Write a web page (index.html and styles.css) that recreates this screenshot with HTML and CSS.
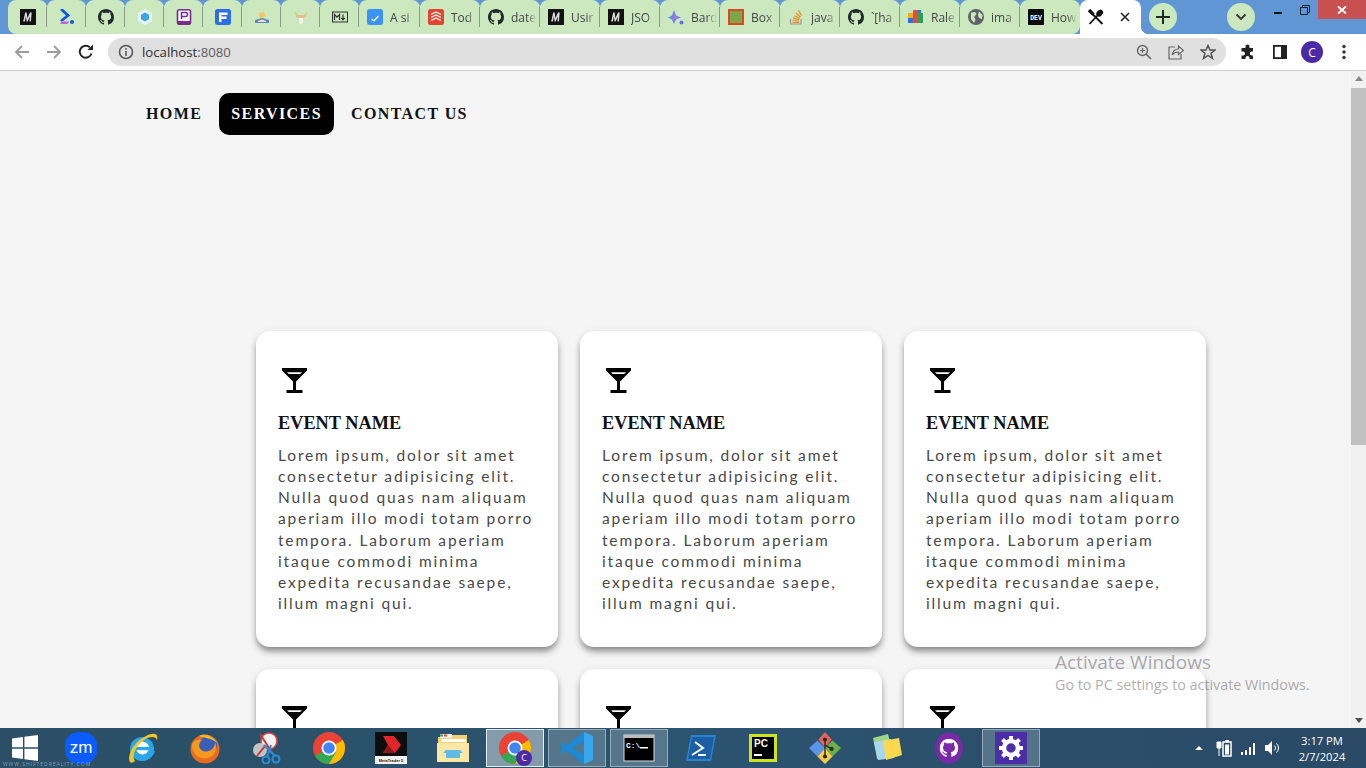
FILE: index.html
```html
<!DOCTYPE html>
<html lang="en">
<head>
<meta charset="utf-8">
<title>localhost:8080</title>
<link rel="stylesheet" href="styles.css">
</head>
<body>
<svg class="defs" width="0" height="0" aria-hidden="true">
  <symbol id="gh" viewBox="0 0 16 16"><path d="M8 0C3.58 0 0 3.58 0 8c0 3.54 2.29 6.53 5.47 7.59.4.07.55-.17.55-.38 0-.19-.01-.82-.01-1.49-2.01.37-2.53-.49-2.69-.94-.09-.23-.48-.94-.82-1.13-.28-.15-.68-.52-.01-.53.63-.01 1.08.58 1.23.82.72 1.21 1.87.87 2.33.66.07-.52.28-.87.51-1.07-1.78-.2-3.64-.89-3.64-3.95 0-.87.31-1.59.82-2.15-.08-.2-.36-1.02.08-2.12 0 0 .67-.21 2.2.82.64-.18 1.32-.27 2-.27.68 0 1.36.09 2 .27 1.53-1.04 2.2-.82 2.2-.82.44 1.1.16 1.92.08 2.12.51.56.82 1.27.82 2.15 0 3.07-1.87 3.75-3.65 3.95.29.25.54.73.54 1.48 0 1.07-.01 1.93-.01 2.2 0 .21.15.46.55.38A8.013 8.013 0 0016 8c0-4.42-3.58-8-8-8z"/></symbol>
  <symbol id="mm" viewBox="0 0 16 16"><rect width="16" height="16" fill="#111"/><path d="M3.200 12.500 5.200 3.600h1.500l.7 5.600 2.600-5.600h1.700l-.8 8.900H9.500l.4-5-2.300 5H6.600l-.7-5-1.100 5z" fill="#ddd"/></symbol>
  <symbol id="cocktail" viewBox="0 0 25 25"><path d="M0 0H25V2.400L14 13.500V22H20.500V25H4.500V22H11V13.500L0 2.400Z"/><path d="M5 4.200H20L18.200 6H6.800Z" fill="#fff"/></symbol>
  <symbol id="chrome" viewBox="0 0 32 32"><circle cx="16" cy="16" r="16" fill="#ea4335"/><path d="M16 16 30 8a16 16 0 0 1 2 8c0 9-7 16-16 16Z" fill="#fbbc04"/><path d="M16 16 2.100 24a16 16 0 0 0 13.900 8l7-12Z" fill="#34a853"/><circle cx="16" cy="16" r="7.500" fill="#fff"/><circle cx="16" cy="16" r="5.800" fill="#4285f4"/></symbol>
</svg>

<header class="tabstrip">
  <div class="tabs">
    <div class="tab narrow"><svg class="fav"><use href="#mm"/></svg></div>
    <div class="tab narrow"><svg class="fav" viewBox="0 0 16 16"><path d="M2 0 9 6.500 2 12" fill="none" stroke="#1456e0" stroke-width="2.800"/><path d="M1 15 3 12.500H10L8.500 15Z" fill="#c060e8"/><circle cx="13" cy="13" r="2" fill="#1456e0"/></svg></div>
    <div class="tab narrow"><svg class="fav"><use href="#gh"/></svg></div>
    <div class="tab narrow"><svg class="fav" viewBox="0 0 16 16"><path d="M8 0 15 4v8L8 16 1 12V4Z" fill="#e3f4fb"/><path d="M8 3.500 12 5.800v4.400L8 12.500 4 10.200V5.800Z" fill="#3fa4e0"/></svg></div>
    <div class="tab narrow"><svg class="fav" viewBox="0 0 16 16"><rect x="1.500" y="0.800" width="13" height="14.400" rx="2" fill="#fff" stroke="#7a2a8c" stroke-width="1.600"/><rect x="1.500" y="12" width="13" height="3" fill="#7a2a8c"/><path d="M5.500 10V3.500H9.500a2 2 0 0 1 0 4H5.500" fill="none" stroke="#7a2a8c" stroke-width="1.500"/></svg></div>
    <div class="tab narrow"><svg class="fav" viewBox="0 0 16 16"><rect width="16" height="16" rx="2.500" fill="#2f6ee5"/><path d="M4 13V3.500H12.500V6H6.500V7.500H11.500V10H6.500V13Z" fill="#fff"/></svg></div>
    <div class="tab narrow"><svg class="fav" viewBox="0 0 16 16"><circle cx="8" cy="6" r="3" fill="#f4c862"/><path d="M1 11 8 9l7 2v3H1Z" fill="#5a87c8"/><path d="M4 12 8 10.500 12 12V13H4Z" fill="#f5e3b8"/></svg></div>
    <div class="tab narrow"><svg class="fav" viewBox="0 0 16 16"><path d="M2 2 5 6H11L14 2 13 8 10 9V14L8 16 6 14V9L3 8Z" fill="#e5c08a"/><path d="M6 9H10V14L8 16 6 14Z" fill="#f5f1e8"/></svg></div>
    <div class="tab narrow"><svg class="fav" viewBox="0 0 16 16"><rect x="0.500" y="3" width="15" height="10" fill="none" stroke="#333" stroke-width="1"/><path d="M2.500 11V5.500L5 8.200 7.500 5.500V11M11 5.500V10.500M9.200 8.800 11 10.800 12.800 8.800" fill="none" stroke="#333" stroke-width="1.200"/></svg></div>
    <div class="tab wide"><svg class="fav" viewBox="0 0 16 16"><rect width="16" height="16" rx="2.500" fill="#3b94f5"/><path d="M4.500 10 7 12 11.500 7" fill="none" stroke="#fff" stroke-width="1.200"/></svg><span class="tab-label">A si</span></div>
    <div class="tab wide"><svg class="fav" viewBox="0 0 16 16"><rect width="16" height="16" rx="2.500" fill="#e44332"/><path d="M3 5.500 8 3l5 2.500M3 8.500 8 6l5 2.500M3 11.500 8 9l5 2.500" fill="none" stroke="#fff" stroke-width="1.200"/></svg><span class="tab-label">Tod</span></div>
    <div class="tab wide"><svg class="fav"><use href="#gh"/></svg><span class="tab-label">date</span></div>
    <div class="tab wide"><svg class="fav"><use href="#mm"/></svg><span class="tab-label">Usir</span></div>
    <div class="tab wide"><svg class="fav"><use href="#mm"/></svg><span class="tab-label">JSO</span></div>
    <div class="tab wide"><svg class="fav" viewBox="0 0 16 16"><path d="M6 1 8 6.500 13 8.500 8 10.500 6 15 4 10.500 0 8.500 4 6.500Z" fill="#5d8ee8"/><path d="M6 4 7 7 10 8.500 7 10 6 12.500Z" fill="#c76ad8"/><circle cx="13.500" cy="13.500" r="2" fill="#6a6fe0"/></svg><span class="tab-label">Bard</span></div>
    <div class="tab wide"><svg class="fav" viewBox="0 0 16 16"><rect width="16" height="16" fill="#e8431f"/><rect x="2" y="2" width="12" height="12" fill="#7ca64a"/></svg><span class="tab-label">Box</span></div>
    <div class="tab wide"><svg class="fav" viewBox="0 0 16 16"><path d="M2.500 10V15H13V10" fill="none" stroke="#999" stroke-width="1.200"/><path d="M4.500 13.500H11M4.500 11.500 11 12.200M5 9.200 11.300 10.700M6 6.800 11.800 9.300M8 4 12.500 8M10.500 1.500 13.500 6.500" fill="none" stroke="#f08a24" stroke-width="1.200"/></svg><span class="tab-label">java</span></div>
    <div class="tab wide"><svg class="fav"><use href="#gh"/></svg><span class="tab-label">`[ha</span></div>
    <div class="tab wide"><svg class="fav" viewBox="0 0 16 16"><rect x="0" y="4" width="5" height="5" fill="#e8b020"/><rect x="0" y="9" width="5" height="5" fill="#2f6ee5"/><rect x="5" y="1" width="5" height="13" fill="#e84a3a"/><rect x="10" y="4" width="5" height="10" fill="#2f9e57"/><rect x="10" y="1" width="3" height="3" fill="#2f6ee5"/></svg><span class="tab-label">Rale</span></div>
    <div class="tab wide"><svg class="fav" viewBox="0 0 16 16"><circle cx="8" cy="8" r="8" fill="#5f6368"/><path d="M3 3.500 7 3 8.500 5 6 8 7.500 10.500 6 14 3 10ZM11 2.500 14.500 6 14 10 11 9 10 6Z" fill="#cbe8bf"/></svg><span class="tab-label">ima</span></div>
    <div class="tab wide"><svg class="fav" viewBox="0 0 16 16"><rect width="16" height="16" rx="1" fill="#0a0a0a"/><text class="dev" x="8" y="10.500" text-anchor="middle">DEV</text></svg><span class="tab-label">How</span></div>
    <div class="tab active">
      <svg class="fav" viewBox="0 0 16 16"><path d="M14.500 15 5 5.500" fill="none" stroke="#111" stroke-width="1.800"/><path d="M1 1 5.500 5.500" fill="none" stroke="#111" stroke-width="3.400"/><path d="M1.500 15 9.500 6.500" fill="none" stroke="#111" stroke-width="1.800"/><ellipse cx="11.700" cy="4.100" rx="2.900" ry="3.800" transform="rotate(45 11.700 4.100)" fill="#111"/></svg>
      <svg class="tab-close" viewBox="0 0 10 10"><path d="M1 1 9 9M9 1 1 9" fill="none" stroke="#222" stroke-width="1.600"/></svg>
    </div>
  </div>
  <button class="round-btn new-tab" aria-label="New tab"><svg viewBox="0 0 14 14"><path d="M7 0V14M0 7H14" fill="none" stroke="#1d2a1d" stroke-width="2"/></svg></button>
  <button class="round-btn tab-search" aria-label="Search tabs"><svg viewBox="0 0 12 8"><path d="M1.500 1.500 6 6 10.500 1.500" fill="none" stroke="#333" stroke-width="1.800"/></svg></button>
  <div class="winctl">
    <div class="win-btn"><svg viewBox="0 0 10 10"><path d="M1 8H9" stroke="#111" stroke-width="2"/></svg></div>
    <div class="win-btn"><svg viewBox="0 0 10 10"><path d="M0.500 2.500H7.500V9.500H0.500ZM2.500 2.500V0.500H9.500V7.500H7.500" fill="none" stroke="#222" stroke-width="1"/></svg></div>
    <div class="win-close"><svg viewBox="0 0 10 10"><path d="M1 1.500 9 8.500M9 1.500 1 8.500" stroke="#fff" stroke-width="1.800"/></svg></div>
  </div>
</header>

<nav class="toolbar">
  <div class="tool"><svg viewBox="0 0 16 16"><path d="M15 8H2M8 2 2 8l6 6" fill="none" stroke="#9a9a9a" stroke-width="1.800"/></svg></div>
  <div class="tool"><svg viewBox="0 0 16 16"><path d="M1 8H14M8 2l6 6-6 6" fill="none" stroke="#9a9a9a" stroke-width="1.800"/></svg></div>
  <div class="tool"><svg viewBox="0 0 16 16"><path d="M13.500 9.500A6 6 0 1 1 11.800 3.300" fill="none" stroke="#222" stroke-width="1.900"/><path d="M9.500 6H15V0.500Z" fill="#222"/></svg></div>
  <div class="omnibox">
    <svg class="info" viewBox="0 0 16 16"><circle cx="8" cy="8" r="6.500" fill="none" stroke="#555" stroke-width="1.500"/><path d="M8 7V12M8 4V5.600" stroke="#555" stroke-width="1.500"/></svg>
    <span class="url">localhost<span class="port">:8080</span></span>
    <div class="omni-actions">
      <div class="tool"><svg viewBox="0 0 16 16"><circle cx="6.500" cy="6.500" r="5" fill="none" stroke="#666" stroke-width="1.400"/><path d="M10 10 15 15" stroke="#666" stroke-width="1.600"/><path d="M4 6.500H9M6.500 4V9" stroke="#666" stroke-width="1.200"/></svg></div>
      <div class="tool"><svg viewBox="0 0 16 16"><path d="M7 3H1V15H13V10" fill="none" stroke="#666" stroke-width="1.200"/><path d="M4 11C5 6.500 8 5 10.500 5V2L15.500 6.500 10.500 10.500V8C8 8 5.500 9 4 11Z" fill="none" stroke="#666" stroke-width="1.200"/></svg></div>
      <div class="tool"><svg viewBox="0 0 16 16"><path d="M8 1.500 10 6H15L11 9.200 12.500 14.500 8 11.500 3.500 14.500 5 9.200 1 6H6Z" fill="none" stroke="#555" stroke-width="1.500"/></svg></div>
    </div>
  </div>
  <div class="tool"><svg viewBox="0 0 16 16"><path d="M5.500 2.500a2 2 0 0 1 4 0V4H13v3.500h-1.200a2 2 0 0 0 0 4H13V15H9.500v-1a2 2 0 0 0-4 0v1H1.500v-3.500H3a2 2 0 0 0 0-4H1.500V4h4Z" fill="#222"/></svg></div>
  <div class="tool"><svg viewBox="0 0 16 16"><rect x="1.900" y="1.900" width="12.200" height="12.200" fill="none" stroke="#222" stroke-width="1.800"/><rect x="9" y="1" width="6" height="14" fill="#222"/></svg></div>
  <div class="tool"><span class="avatar">C</span></div>
  <div class="tool"><svg viewBox="0 0 16 16"><circle cx="8" cy="2.500" r="1.700" fill="#333"/><circle cx="8" cy="8" r="1.700" fill="#333"/><circle cx="8" cy="13.500" r="1.700" fill="#333"/></svg></div>
</nav>

<div class="viewport">
  <main class="page">
    <ul class="site-nav">
      <li class="nav-item">HOME</li>
      <li class="nav-item current">SERVICES</li>
      <li class="nav-item">CONTACT US</li>
    </ul>
    <section class="cards">
      <article class="card"><svg class="card-icon"><use href="#cocktail"/></svg><h3 class="card-title">EVENT NAME</h3><p class="card-text">Lorem ipsum, dolor sit amet consectetur adipisicing elit. Nulla quod quas nam aliquam aperiam illo modi totam porro tempora. Laborum aperiam itaque commodi minima expedita recusandae saepe, illum magni qui.</p></article>
      <article class="card"><svg class="card-icon"><use href="#cocktail"/></svg><h3 class="card-title">EVENT NAME</h3><p class="card-text">Lorem ipsum, dolor sit amet consectetur adipisicing elit. Nulla quod quas nam aliquam aperiam illo modi totam porro tempora. Laborum aperiam itaque commodi minima expedita recusandae saepe, illum magni qui.</p></article>
      <article class="card"><svg class="card-icon"><use href="#cocktail"/></svg><h3 class="card-title">EVENT NAME</h3><p class="card-text">Lorem ipsum, dolor sit amet consectetur adipisicing elit. Nulla quod quas nam aliquam aperiam illo modi totam porro tempora. Laborum aperiam itaque commodi minima expedita recusandae saepe, illum magni qui.</p></article>
      <article class="card"><svg class="card-icon"><use href="#cocktail"/></svg><h3 class="card-title">EVENT NAME</h3><p class="card-text">Lorem ipsum, dolor sit amet consectetur adipisicing elit. Nulla quod quas nam aliquam aperiam illo modi totam porro tempora. Laborum aperiam itaque commodi minima expedita recusandae saepe, illum magni qui.</p></article>
      <article class="card"><svg class="card-icon"><use href="#cocktail"/></svg><h3 class="card-title">EVENT NAME</h3><p class="card-text">Lorem ipsum, dolor sit amet consectetur adipisicing elit. Nulla quod quas nam aliquam aperiam illo modi totam porro tempora. Laborum aperiam itaque commodi minima expedita recusandae saepe, illum magni qui.</p></article>
      <article class="card"><svg class="card-icon"><use href="#cocktail"/></svg><h3 class="card-title">EVENT NAME</h3><p class="card-text">Lorem ipsum, dolor sit amet consectetur adipisicing elit. Nulla quod quas nam aliquam aperiam illo modi totam porro tempora. Laborum aperiam itaque commodi minima expedita recusandae saepe, illum magni qui.</p></article>
    </section>
  </main>
  <aside class="scrollbar">
    <span class="arrow up"></span>
    <div class="track"><div class="thumb"></div></div>
    <span class="arrow down"></span>
  </aside>
</div>

<div class="activate">
  <div class="activate-title">Activate Windows</div>
  <div class="activate-sub">Go to PC settings to activate Windows.</div>
</div>

<footer class="taskbar">
  <div class="start"><svg viewBox="0 0 26 26"><path d="M0 3.600 11 2V12.300H0ZM12.400 1.800 26 0V12.300H12.400ZM0 13.700H11V24L0 22.400ZM12.400 13.700H26V26L12.400 24.200Z" fill="#fff"/></svg></div>
  <div class="app"><svg viewBox="0 0 32 32"><rect width="32" height="32" rx="14" fill="#0b5cff"/><text class="zm" x="16" y="21" text-anchor="middle">zm</text></svg></div>
  <div class="app"><svg viewBox="0 0 32 32"><circle cx="15" cy="17" r="12" fill="#2ba6e8"/><circle cx="15.500" cy="16" r="6.500" fill="#fff"/><rect x="7" y="15" width="16" height="3.200" fill="#2ba6e8"/><path d="M21 19H28C26 25 21 29 14 29 18 27 20 24 21 19Z" fill="#2ba6e8"/><path d="M3 30C0 25 5 11 19 4 26 0 32 1 30 8 29 5 26 4 20 6 9 12 4 24 8 29 6 31 4 31 3 30Z" fill="#f3c623"/></svg></div>
  <div class="app"><svg viewBox="0 0 32 32"><circle cx="16" cy="17" r="14.500" fill="#ea6a1f"/><circle cx="19" cy="13" r="9" fill="#3a5fb8"/><path d="M3 13C3 25 15 30 23 24 27 21 28 15 26 10 26 17 20 21 14 19 9 17 9 11 13 8 8 7 4 9 3 13Z" fill="#f69a1e"/><path d="M10 4C16 1 25 4 28 11 23 6 15 6 10 4Z" fill="#f1b82b"/></svg></div>
  <div class="app"><svg viewBox="0 0 32 32"><circle cx="18" cy="9" r="8" fill="#f2f2f2" stroke="#d44" stroke-width="1.500"/><circle cx="9" cy="18" r="7" fill="#c4c4c4"/><path d="M9 2 22 22M14 14 6 24" stroke="#c33" stroke-width="2"/><circle cx="25" cy="27" r="3.500" fill="none" stroke="#2a8fd8" stroke-width="2"/><circle cx="15" cy="28" r="3.500" fill="none" stroke="#2a8fd8" stroke-width="2"/><path d="M13 13 24 24M20 13 16 25" stroke="#2a8fd8" stroke-width="2"/></svg></div>
  <div class="app"><svg><use href="#chrome"/></svg></div>
  <div class="app"><svg viewBox="0 0 32 32"><rect width="32" height="32" fill="#0d0d0d"/><path d="M8 4H19L26 13 20 21H8L13 13Z" fill="#e0262b"/><path d="M8 21H20L13 13Z" fill="#8c1a1d"/><rect y="24" width="32" height="8" fill="#f2f2f2"/><text class="mt" x="16" y="30" text-anchor="middle">MetaTrader 5</text></svg></div>
  <div class="app"><svg viewBox="0 0 32 32"><path d="M1 5H13L15 3H30V28H1Z" fill="#f3d070"/><rect x="3" y="2" width="12" height="4" fill="#eee"/><rect x="3" y="2.500" width="3" height="2" fill="#36a852"/><rect x="7" y="2.500" width="3" height="2" fill="#e04a3a"/><rect x="4" y="7" width="25" height="3" fill="#fff"/><path d="M0 11H32V30H0Z" fill="#fbe8a6"/><path d="M9 26V21H23V26M6 21H26L23 18H9Z" fill="#5dbbe6"/></svg></div>
  <div class="app"><div class="app-box"><svg class="badged"><use href="#chrome"/></svg><span class="badge">C</span></div></div>
  <div class="app"><div class="app-box dim"><svg viewBox="0 0 32 32"><path d="M23 0 32 4V28L23 32 6 19 2 22 0 20V12L2 10 6 13ZM23 9 12 16 23 23Z" fill="#1e88d4"/><path d="M23 0 32 4V28L23 32Z" fill="#38a8ec"/></svg></div></div>
  <div class="app"><div class="app-box dim"><svg viewBox="0 0 32 32"><rect width="30" height="26" x="1" y="3" fill="#000" stroke="#ddd" stroke-width="1"/><rect x="1" y="3" width="30" height="3" fill="#bbb"/><text class="cmd" x="3" y="16">C:\</text><rect x="17" y="15" width="8" height="1.500" fill="#fff"/></svg></div></div>
  <div class="app"><svg viewBox="0 0 32 32"><path d="M6 3H31L26 29H1Z" fill="#2b82cf"/><path d="M7 5H29L25 27H3Z" fill="#1a5ea6"/><path d="M10 10 18 16 7 23M13 23H21" fill="none" stroke="#fff" stroke-width="2"/></svg></div>
  <div class="app"><svg viewBox="0 0 32 32"><rect width="28" height="28" x="2" y="2" fill="#cfe21f"/><rect x="5" y="5" width="22" height="22" fill="#000"/><text class="pc" x="7" y="15">PC</text><rect x="7" y="22" width="8" height="2" fill="#fff"/></svg></div>
  <div class="app"><svg viewBox="0 0 34 34"><path d="M17 0 24 8 17 17 10 8Z" fill="#e8645a"/><path d="M0 17 9 9 17 17 9 26Z" fill="#5b95e8"/><path d="M34 17 25 9 17 17 25 26Z" fill="#6bb14a"/><path d="M17 34 9 26 17 17 25 26Z" fill="#f2cb4c"/><path d="M17 8V26M17 14 24 18" stroke="#2b2b2b" stroke-width="1.500"/><circle cx="17" cy="8" r="2.200" fill="#2b2b2b"/><circle cx="17" cy="26" r="2.200" fill="#2b2b2b"/><circle cx="24" cy="18" r="2.200" fill="#2b2b2b"/></svg></div>
  <div class="app"><svg viewBox="0 0 32 32"><path d="M2 6 17 2 22 22 6 27Z" fill="#9fd486"/><path d="M3 10 20 7 23 26 7 28Z" fill="#a8d8f0"/><path d="M12 9 28 6 31 23 15 28Z" fill="#fbd850"/></svg></div>
  <div class="app"><svg viewBox="0 0 32 36"><ellipse cx="16" cy="18" rx="15.500" ry="17.500" fill="#7a2aa8"/><g transform="translate(5.500 7.500) scale(1.310)"><use href="#gh" width="16" height="16" fill="#fff"/></g></svg></div>
  <div class="app"><div class="app-box dim"><svg viewBox="0 0 32 32"><rect width="32" height="32" fill="#4b2ea8"/><circle cx="16" cy="16" r="7" fill="none" stroke="#fff" stroke-width="4.500"/><path d="M16 4V9M16 23V28M4 16H9M23 16H28M7.500 7.500 11 11M21 21 24.500 24.500M24.500 7.500 21 11M11 21 7.500 24.500" stroke="#fff" stroke-width="4"/></svg></div></div>
  <div class="tray">
    <span class="tray-up"></span>
    <svg class="tray-ic" viewBox="0 0 18 18"><rect x="8" y="3" width="8" height="14" fill="none" stroke="#fff" stroke-width="1.500"/><rect x="10" y="5.500" width="4" height="10" fill="#fff"/><rect x="10" y="1" width="4" height="2" fill="#fff"/><path d="M2 3V9H6V3ZM4 9V17" fill="#fff" stroke="#fff"/></svg>
    <svg class="tray-ic" viewBox="0 0 18 18"><path d="M2 13h2v3H2ZM6 11h2v5H6ZM10 8h2v8h-2ZM14 4h2v12h-2Z" fill="#fff"/></svg>
    <svg class="tray-ic" viewBox="0 0 18 18"><path d="M2 6H5L9 2V16L5 12H2Z" fill="#fff"/><path d="M11.500 6.500a3.500 3.500 0 0 1 0 5M13.500 4.500a6 6 0 0 1 0 9" fill="none" stroke="#fff" stroke-width="1"/></svg>
    <div class="clock"><span>3:17 PM</span><span>2/7/2024</span></div>
  </div>
  <span class="watermark">WWW.SHIFTEDREALITY.COM</span>
</footer>
</body>
</html>
```
FILE: styles.css
```css
* { box-sizing: border-box; }
html, body { margin: 0; height: 100%; }
body {
  display: flex;
  flex-direction: column;
  height: 768px;
  overflow: hidden;
  font-family: "Open Sans", "Liberation Sans", sans-serif;
  background: #f5f5f5;
}
.defs { position: absolute; }

/* Tab strip */
.tabstrip {
  display: flex;
  flex: none;
  height: 34px;
  padding-left: 8px;
  background: #6196d4;
  align-items: flex-start;
}
.tabs { display: flex; height: 34px; width: 1133px; flex: none; }
.tab {
  position: relative;
  display: flex;
  align-items: center;
  height: 34px;
  background: #cbe8bf;
  border-radius: 8px 8px 0 0;
  flex: none;
}
.tab:not(.active)::after {
  content: "";
  position: absolute;
  right: 0;
  top: 7px;
  width: 1px;
  height: 20px;
  background: #8a9a84;
}
.tab:nth-last-child(2)::after { display: none; }
.tab:first-child { border-bottom-left-radius: 8px; }
.tab:nth-last-child(2) { border-bottom-right-radius: 8px; }
.tab.narrow { width: 39px; justify-content: center; }
.tab.wide { width: 60px; padding-left: 8px; }
.tab.wide:nth-child(10) { width: 61px; }
.fav { width: 16px; height: 16px; flex: none; fill: #24292f; }
.tab-label {
  margin-left: 7px;
  width: 26px;
  overflow: hidden;
  white-space: nowrap;
  font-size: 12px;
  color: #454545;
  -webkit-mask-image: linear-gradient(to right, #000 60%, transparent);
  mask-image: linear-gradient(to right, #000 60%, transparent);
}
.dev { font: 700 6.5px "Liberation Mono", monospace; fill: #fff; }
.tab.active {
  width: 61px;
  background: #fff;
  padding-left: 8px;
}
.tab.active::before {
  content: "";
  position: absolute;
  right: -8px;
  bottom: 0;
  width: 8px;
  height: 8px;
  background: radial-gradient(circle at 100% 0, transparent 8px, #fff 8.5px);
}
.tab-close { width: 10px; height: 10px; margin-left: 16px; flex: none; }

.round-btn {
  display: flex;
  align-items: center;
  justify-content: center;
  width: 28px;
  height: 28px;
  margin-top: 3px;
  padding: 0;
  border: 0;
  border-radius: 50%;
  background: #cbe8bf;
  flex: none;
}
.new-tab { margin-left: 8px; }
.new-tab svg { width: 14px; height: 14px; }
.tab-search { margin-left: 50px; }
.tab-search svg { width: 12px; height: 8px; }
.winctl { display: flex; margin-left: auto; height: 19px; }
.win-btn { display: flex; align-items: center; justify-content: center; width: 26px; height: 19px; }
.win-btn:first-child { width: 28px; }
.win-btn svg { width: 10px; height: 10px; }
.win-close {
  display: flex;
  align-items: center;
  justify-content: center;
  width: 48px;
  height: 19px;
  background: #c75050;
}
.win-close svg { width: 10px; height: 10px; }

/* Toolbar */
.toolbar {
  display: flex;
  align-items: center;
  flex: none;
  height: 37px;
  padding: 0 6px;
  background: #fff;
  border-bottom: 1px solid #cfcfcf;
}
.tool {
  display: flex;
  align-items: center;
  justify-content: center;
  width: 32px;
  height: 28px;
  flex: none;
}
.tool svg { width: 16px; height: 16px; }
.omnibox {
  display: flex;
  align-items: center;
  flex: 1;
  height: 28px;
  margin: 0 6px;
  padding: 0 2px 0 10px;
  background: #e0e0e0;
  border-radius: 14px;
}
.info { width: 16px; height: 16px; flex: none; }
.url { margin-left: 8px; margin-top: -1px; font-size: 13.2px; color: #303030; }
.port { color: #5f5f5f; }
.omni-actions { display: flex; margin-left: auto; }
.avatar {
  display: flex;
  align-items: center;
  justify-content: center;
  width: 22px;
  height: 22px;
  border-radius: 50%;
  background: #4c2aa5;
  color: #fff;
  font-size: 12px;
}

/* Page */
.viewport { display: flex; flex: 1; min-height: 0; }
.page { flex: 1; overflow: hidden; background: #f5f5f5; }
.site-nav {
  display: flex;
  gap: 5px;
  margin: 22px 0 0;
  padding: 0 0 0 134px;
  list-style: none;
}
.nav-item {
  padding: 0 12px;
  height: 42px;
  border-radius: 10px;
  font: 700 16px/42px "Liberation Serif", serif;
  letter-spacing: 1.4px;
  color: #111;
}
.nav-item.current { background: #000; color: #fff; }
.cards {
  display: grid;
  grid-template-columns: repeat(3, 302px);
  gap: 22px;
  margin-top: 196px;
  padding-left: 256px;
}
.card {
  height: 316px;
  padding: 37px 22px 0;
  background: #fff;
  border-radius: 14px;
  box-shadow: 0 5px 7px -1px rgba(0, 0, 0, 0.45), 0 0 8px rgba(0, 0, 0, 0.05);
}
.card-icon { display: block; width: 25px; height: 25px; margin: 0 0 18px 4px; fill: #000; }
.card-title {
  margin: 0 0 10px;
  font: 700 18.3px/24px "Liberation Serif", serif;
  color: #111;
}
.card-text {
  margin: 0;
  font: 400 15.5px/21.14px "Lato", sans-serif;
  letter-spacing: 1.85px;
  color: #484848;
}

/* Scrollbar */
.scrollbar { display: flex; flex-direction: column; align-items: stretch; width: 15px; flex: none; background: #f1f1f1; }
.arrow { display: block; width: 0; height: 0; margin: 5px auto; border-left: 4px solid transparent; border-right: 4px solid transparent; flex: none; }
.arrow.up { border-bottom: 5px solid #888; }
.arrow.down { border-top: 5px solid #505050; }
.track { flex: 1; padding-top: 2px; }
.thumb { height: 357px; background: #c1c1c1; }

/* Activation watermark */
.activate {
  position: absolute;
  left: 1055px;
  top: 650px;
  color: rgba(90, 90, 90, 0.5);
  pointer-events: none;
}
.activate-title { font-size: 19px; line-height: 25px; }
.activate-sub { font-size: 14.3px; line-height: 20px; }

/* Taskbar */
.taskbar {
  position: relative;
  display: flex;
  align-items: center;
  flex: none;
  height: 40px;
  background: linear-gradient(90deg, #2a4f66, #2b5470 50%, #2a4a66);
}
.start { display: flex; align-items: center; justify-content: center; width: 50px; }
.start svg { width: 26px; height: 26px; }
.app {
  display: flex;
  align-items: center;
  justify-content: center;
  width: 62px;
  height: 40px;
  flex: none;
}
.app svg { width: 32px; height: 32px; }
.app-box {
  position: relative;
  display: flex;
  align-items: center;
  justify-content: center;
  width: 58px;
  height: 38px;
  background: rgba(255, 255, 255, 0.42);
  border: 1px solid #e8eef2;
}
.app-box.dim { background: rgba(255, 255, 255, 0.2); border-color: rgba(255, 255, 255, 0.4); }
.badge {
  position: absolute;
  left: 29px;
  top: 20px;
  width: 16px;
  height: 16px;
  border-radius: 50%;
  background: #4c2aa5;
  color: #fff;
  font-size: 9px;
  line-height: 16px;
  text-align: center;
}
.zm { font: 400 17px "Liberation Sans", sans-serif; fill: #fff; }
.mt { font: 700 4px "Liberation Sans", sans-serif; fill: #222; }
.cmd { font: 700 8px "Liberation Mono", monospace; fill: #fff; }
.pc { font: 700 10px "Liberation Sans", sans-serif; fill: #fff; }
.tray { display: flex; align-items: center; margin-left: auto; height: 40px; padding-right: 18px; }
.tray-up { width: 0; height: 0; border-left: 4px solid transparent; border-right: 4px solid transparent; border-bottom: 4px solid #fff; margin-right: 12px; }
.tray-ic { width: 18px; height: 18px; margin-right: 6px; }
.clock {
  display: flex;
  flex-direction: column;
  align-items: center;
  margin-left: 9px;
  margin-top: 2px;
  width: 52px;
  color: #fff;
  font-size: 11.2px;
  line-height: 16px;
}
.watermark {
  position: absolute;
  left: 3px;
  bottom: 1px;
  font-size: 5px;
  letter-spacing: 1px;
  color: rgba(200, 215, 225, 0.6);
}
```
